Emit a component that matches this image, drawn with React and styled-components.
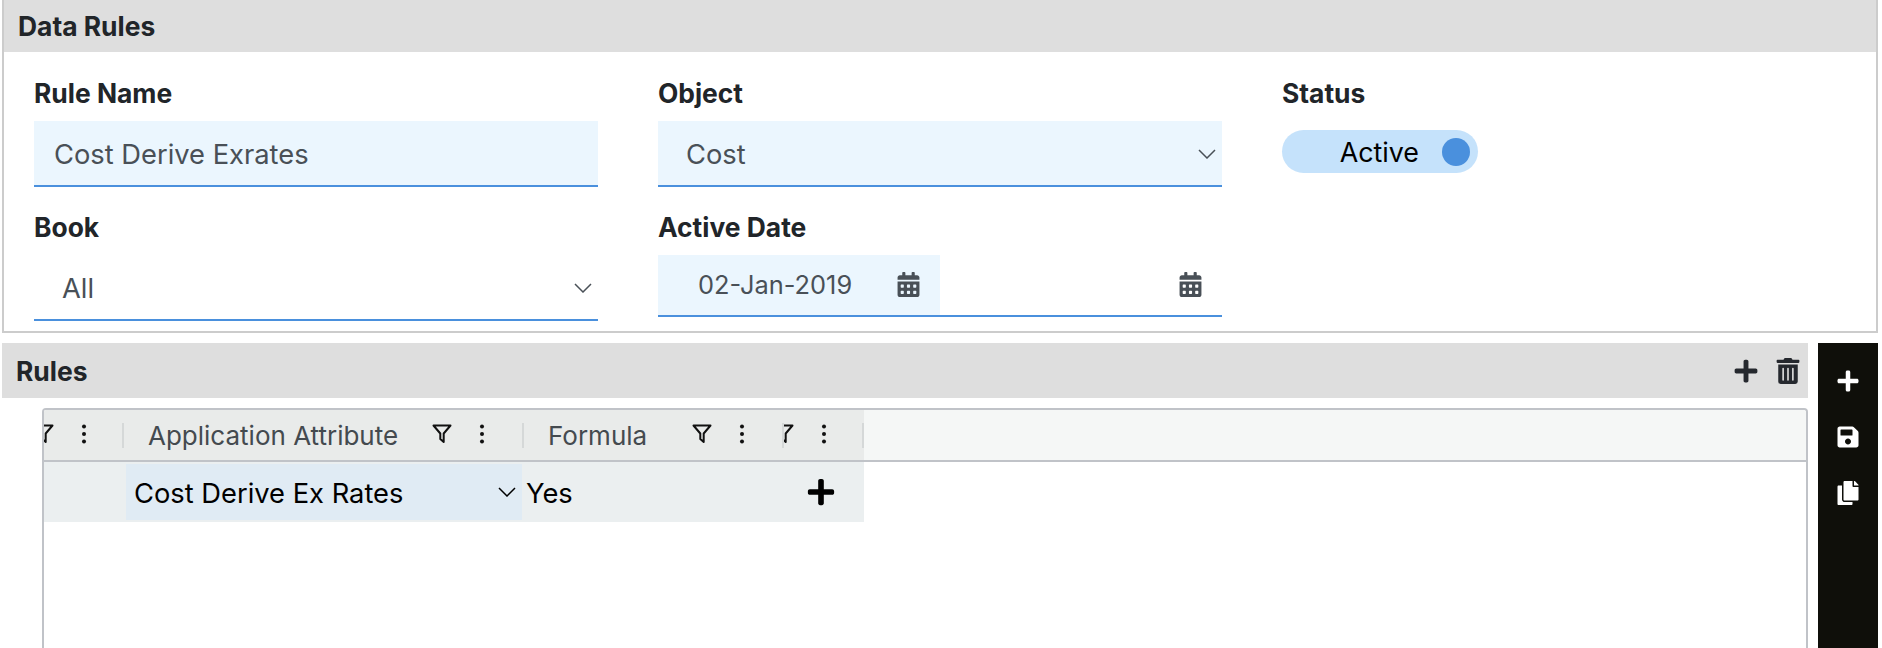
import React from 'react';
import styled, { createGlobalStyle } from 'styled-components';
import { FaPlus, FaSave, FaCopy, FaTrashAlt, FaCalendarAlt } from 'react-icons/fa';

const GlobalStyle = createGlobalStyle`
  html, body {
    margin: 0;
    padding: 0;
    background: #fff;
    overflow: hidden;
    font-family: Inter, "Liberation Sans", sans-serif;
  }
`;

const Page = styled.div`
  height: 648px;
  padding-left: 2px;
  display: flex;
  flex-direction: column;
  gap: 10px;
  overflow: hidden;
`;

const Panel = styled.section`
  width: 1876px;
  box-sizing: border-box;
  border: 2px solid #cccccc;
  border-top: 0;
`;

const PanelTitle = styled.div`
  display: flex;
  align-items: center;
  justify-content: space-between;
  height: ${({ $height }) => $height}px;
  padding: 0 ${({ $right }) => $right || 0}px 0 ${({ $left }) => $left}px;
  background: #dedede;
  color: #212529;
  font-size: 26.4px;
  font-weight: 700;
`;

const Form = styled.div`
  display: grid;
  grid-template-columns: 564px 564px 564px;
  column-gap: 60px;
  row-gap: 22px;
  padding: 23px 0 10px 30px;
`;

const Field = styled.div`
  display: flex;
  flex-direction: column;
`;

const Label = styled.label`
  height: 36px;
  margin-bottom: 10px;
  line-height: 36px;
  color: #212529;
  font-size: 26.4px;
  font-weight: 700;
`;

const Input = styled.div`
  display: flex;
  align-items: center;
  justify-content: space-between;
  height: 62px;
  padding: 2px 6px 0 ${({ $left }) => $left}px;
  border-bottom: 2px solid #4a90dd;
  background: ${({ $filled }) => ($filled ? '#ebf6fe' : 'transparent')};
  color: #495057;
  font-size: 27.3px;
`;

const Toggle = styled.div`
  display: flex;
  align-items: center;
  justify-content: flex-end;
  gap: 23px;
  width: 196px;
  height: 43px;
  margin-top: 9px;
  padding-right: 8px;
  box-sizing: border-box;
  border-radius: 22px;
  background: #c5e2fb;
  color: #000;
  font-size: 26.8px;
`;

const Knob = styled.span`
  width: 28px;
  height: 28px;
  border-radius: 50%;
  background: #4a90dd;
`;

const DateRange = styled.div`
  display: grid;
  grid-template-columns: 1fr 1fr;
  border-bottom: 2px solid #4a90dd;
`;

const DateCell = styled.div`
  display: flex;
  align-items: center;
  justify-content: ${({ $filled }) => ($filled ? 'space-between' : 'flex-end')};
  height: 60px;
  padding: 0 19px 1px 40px;
  box-sizing: border-box;
  background: ${({ $filled }) => ($filled ? '#ebf6fe' : 'transparent')};
  color: #495057;
  font-size: 25.4px;
`;

const Workspace = styled.div`
  display: flex;
  gap: 10px;
  flex: 1;
  min-height: 0;
`;

const Main = styled.div`
  width: 1806px;
  display: flex;
  flex-direction: column;
`;

const Tools = styled.div`
  display: flex;
  align-items: center;
  gap: 16px;
  color: #25282e;
`;

const Side = styled.aside`
  width: 60px;
  padding-top: 10px;
  box-sizing: border-box;
  background: #0f0f0a;
  color: #fff;
`;

const SideButton = styled.div`
  display: flex;
  align-items: center;
  justify-content: center;
  height: 56px;
`;

const GridBox = styled.div`
  flex: 1;
  margin: 10px 0 0 40px;
  border: 2px solid #c0c3c8;
  border-bottom: 0;
  border-radius: 4px 4px 0 0;
  overflow: hidden;
`;

const GridHead = styled.div`
  height: 50px;
  border-bottom: 2px solid #c0c3c8;
  background: #f5f7f6;
`;

const Pinned = styled.div`
  display: flex;
  width: 820px;
  height: 100%;
  background: #e9ebea;
`;

const HeadCell = styled.div`
  display: flex;
  align-items: center;
  justify-content: flex-end;
  flex-shrink: 0;
  width: ${({ $width }) => $width}px;
  overflow: hidden;
  color: #444a4f;
  font-size: 26px;
`;

const HeadTitle = styled.span`
  flex: 1;
  padding-left: 24px;
  white-space: nowrap;
`;

const HeadIcon = styled.svg`
  flex-shrink: 0;
  width: ${({ $size }) => $size}px;
  height: 20px;
  margin-top: -3px;
  color: #111;
`;

const IconGap = styled.span`
  flex-shrink: 0;
  width: 20px;
`;

const Divider = styled.span`
  flex-shrink: 0;
  width: 2px;
  height: 25px;
  margin-left: ${({ $gap }) => $gap}px;
  background: #d5d8d8;
`;

const GridRow = styled.div`
  display: flex;
  align-items: center;
  width: 820px;
  height: 60px;
  background: #ebeff0;
  color: #000;
  font-size: 27.3px;
`;

const Spacer = styled.div`
  width: 82px;
`;

const SelectCell = styled.div`
  display: flex;
  align-items: center;
  justify-content: space-between;
  width: 396px;
  height: 56px;
  padding: 0 6px 0 8px;
  box-sizing: border-box;
  background: #e0ebf4;
`;

const ValueCell = styled.div`
  display: flex;
  align-items: center;
  justify-content: space-between;
  flex: 1;
  padding: 0 28px 0 4px;
`;

const CellText = styled.span`
  padding-top: 2px;
`;

const Chevron = () => (
  <svg width="18" height="10" viewBox="0 0 18 10" fill="none" stroke="currentColor" strokeWidth="1.5">
    <path d="M1 1l8 8 8-8" />
  </svg>
);

const Filter = () => (
  <HeadIcon $size={20} viewBox="0 0 20 20" fill="none" stroke="currentColor" strokeWidth="2" strokeLinejoin="round">
    <path d="M1.5 1.5h17l-6.8 8v8.5l-3.4-3v-5.5z" />
  </HeadIcon>
);

const Dots = () => (
  <HeadIcon $size={20} viewBox="0 0 20 20" fill="currentColor">
    <circle cx="10" cy="2.5" r="2" />
    <circle cx="10" cy="10" r="2" />
    <circle cx="10" cy="17.5" r="2" />
  </HeadIcon>
);

const HeadIcons = () => (
  <>
    <Filter />
    <IconGap />
    <Dots />
  </>
);

export default function App() {
  return (
    <>
      <GlobalStyle />
      <Page>
        <Panel>
          <PanelTitle $height={52} $left={14}>Data Rules</PanelTitle>
          <Form>
            <Field>
              <Label>Rule Name</Label>
              <Input $filled $left={20}>Cost Derive Exrates</Input>
            </Field>
            <Field>
              <Label>Object</Label>
              <Input $filled $left={28}>Cost<Chevron /></Input>
            </Field>
            <Field>
              <Label>Status</Label>
              <Toggle>Active<Knob /></Toggle>
            </Field>
            <Field>
              <Label>Book</Label>
              <Input $left={28}>All<Chevron /></Input>
            </Field>
            <Field>
              <Label>Active Date</Label>
              <DateRange>
                <DateCell $filled>02-Jan-2019<FaCalendarAlt size={25} /></DateCell>
                <DateCell><FaCalendarAlt size={25} /></DateCell>
              </DateRange>
            </Field>
          </Form>
        </Panel>
        <Workspace>
          <Main>
            <PanelTitle $height={55} $left={14} $right={7}>
              Rules
              <Tools>
                <FaPlus size={26} />
                <FaTrashAlt size={26} />
              </Tools>
            </PanelTitle>
            <GridBox>
              <GridHead>
                <Pinned>
                  <HeadCell $width={80}>
                    <HeadIcons />
                    <Divider $gap={28} />
                  </HeadCell>
                  <HeadCell $width={400}>
                    <HeadTitle>Application Attribute</HeadTitle>
                    <HeadIcons />
                    <Divider $gap={30} />
                  </HeadCell>
                  <HeadCell $width={260}>
                    <HeadTitle>Formula</HeadTitle>
                    <HeadIcons />
                    <Divider $gap={30} />
                  </HeadCell>
                  <HeadCell $width={80}>
                    <HeadIcons />
                    <Divider $gap={28} />
                  </HeadCell>
                </Pinned>
              </GridHead>
              <GridRow>
                <Spacer />
                <SelectCell><CellText>Cost Derive Ex Rates</CellText><Chevron /></SelectCell>
                <ValueCell><CellText>Yes</CellText><FaPlus size={30} /></ValueCell>
              </GridRow>
            </GridBox>
          </Main>
          <Side>
            <SideButton><FaPlus size={24} /></SideButton>
            <SideButton><FaSave size={24} /></SideButton>
            <SideButton><FaCopy size={24} /></SideButton>
          </Side>
        </Workspace>
      </Page>
    </>
  );
}
